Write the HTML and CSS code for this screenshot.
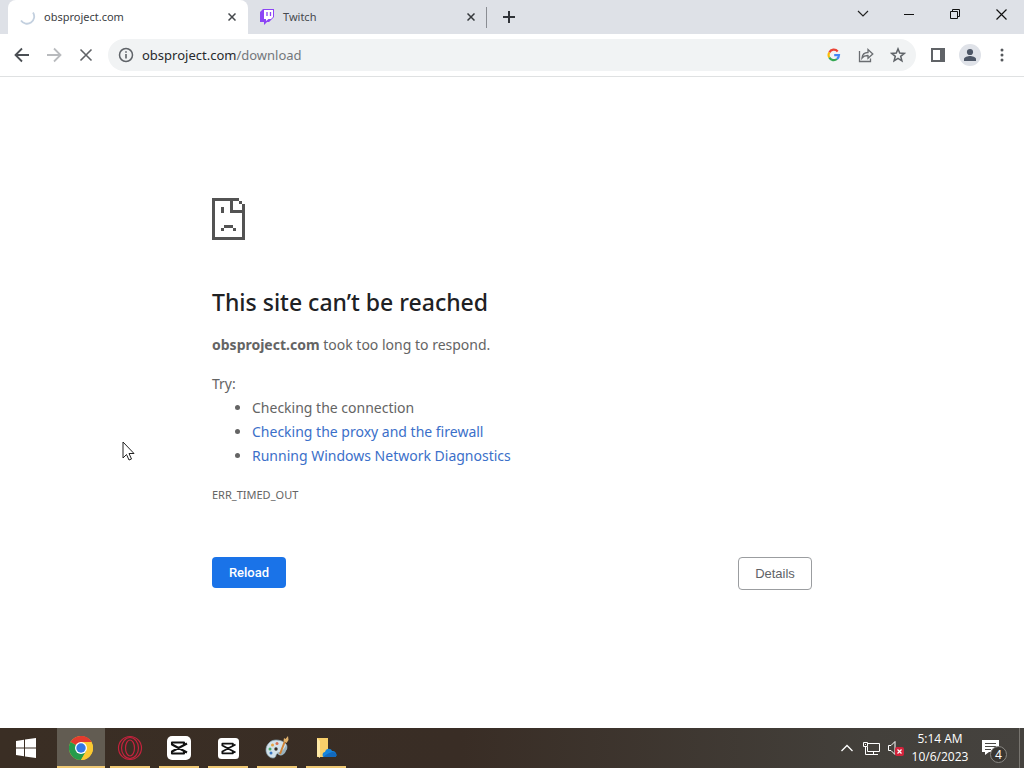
FILE: index.html
```html
<!DOCTYPE html>
<html lang="en">
<head>
<meta charset="utf-8">
<title>obsproject.com</title>
<link rel="stylesheet" href="styles.css">
</head>
<body>
<header class="browser">
  <div class="tabstrip">
    <div class="tab active">
      <svg class="tab-icon" width="16" height="16" viewBox="0 0 16 16" fill="none"><path d="M1 11.500A7 7 0 1 0 13 3.500" stroke="#c3d0df" stroke-width="1.800"/></svg>
      <span class="tab-title">obsproject.com</span>
      <button class="tab-close" aria-label="Close tab"><svg width="8" height="8" viewBox="0 0 8 8"><path d="M.5.500l7 7M7.500.500l-7 7" stroke="#45484c" stroke-width="1.500"/></svg></button>
    </div>
    <div class="tab">
      <svg class="tab-icon" width="16" height="16" viewBox="0 0 16 16"><path d="M4 0L1 3v10h4v3l3-3h2l5-5V0z" fill="#8c45f5"/><path d="M5 1h9v7l-2 2H9.500L7 12v-2H5z" fill="#fff"/><path d="M8 3v4M11.500 3v4" stroke="#8c45f5" stroke-width="1.300"/></svg>
      <span class="tab-title">Twitch</span>
      <button class="tab-close" aria-label="Close tab"><svg width="8" height="8" viewBox="0 0 8 8"><path d="M.5.500l7 7M7.500.500l-7 7" stroke="#35383c" stroke-width="1.500"/></svg></button>
    </div>
    <button class="new-tab" aria-label="New tab"><svg width="12" height="12" viewBox="0 0 12 12"><path d="M6 0v12M0 6h12" stroke="#303338" stroke-width="2"/></svg></button>
    <div class="window-controls">
      <button aria-label="Search tabs"><svg width="12" height="8" viewBox="0 0 12 8" fill="none"><path d="M1 1l5 5 5-5" stroke="#222" stroke-width="1.200"/></svg></button>
      <button aria-label="Minimize"><svg width="10" height="10" viewBox="0 0 10 10"><path d="M0 5.500h10" stroke="#111"/></svg></button>
      <button aria-label="Restore"><svg width="10" height="10" viewBox="0 0 10 10" fill="none" stroke="#111"><path d="M.5 2.500h7v7h-7zM2.500 2.500v-2h7v7h-2"/></svg></button>
      <button aria-label="Close"><svg width="11" height="11" viewBox="0 0 11 11"><path d="M.5.500l10 10M10.500.500l-10 10" stroke="#111" stroke-width="1.200"/></svg></button>
    </div>
  </div>
  <div class="toolbar">
    <button class="tool" aria-label="Back"><svg width="16" height="16" viewBox="0 0 16 16" fill="none" stroke="#4b4f54" stroke-width="1.800"><path d="M15 8H2M8 1.500L1.500 8 8 14.500"/></svg></button>
    <button class="tool" aria-label="Forward"><svg width="16" height="16" viewBox="0 0 16 16" fill="none" stroke="#b9bbbe" stroke-width="1.800"><path d="M1 8h13M8 1.500L14.500 8 8 14.500"/></svg></button>
    <button class="tool" aria-label="Stop loading"><svg width="14" height="14" viewBox="0 0 14 14"><path d="M1.500 1.500l11 11M12.500 1.500l-11 11" stroke="#606367" stroke-width="1.600"/></svg></button>
    <div class="omnibox">
      <button class="info" aria-label="Site information"><svg width="16" height="16" viewBox="0 0 16 16" fill="none"><circle cx="8" cy="8" r="6.500" stroke="#5f6368" stroke-width="1.500"/><path d="M8 7v4.500M8 4.300v1.500" stroke="#5f6368" stroke-width="1.600"/></svg></button>
      <div class="url" role="textbox" aria-label="Address" contenteditable="true" spellcheck="false">obsproject.com<span class="path">/download</span></div>
      <button class="tool" aria-label="Search with Google"><svg width="14" height="14" viewBox="0 0 14 14" fill="none" stroke-width="2.200"><path d="M2.300 4.500A5 5 0 0 1 10.700 3.500" stroke="#ea4335"/><path d="M2.300 4.500A5 5 0 0 0 2.300 9.500" stroke="#fbbc05"/><path d="M2.300 9.500A5 5 0 0 0 10 11" stroke="#34a853"/><path d="M10 11A5 5 0 0 0 12 7.100H7.200" stroke="#4285f4"/></svg></button>
      <button class="tool" aria-label="Share"><svg width="16" height="16" viewBox="0 0 16 16" fill="none" stroke="#6a6d71" stroke-width="1.300"><path d="M1.500 4v10.500h11v-3M4 11c.4-4 2.500-5.500 6-5.500v-3L14.800 7 10 11.300V8.500C7.500 8.400 5.500 9 4 11z"/></svg></button>
      <button class="tool" aria-label="Bookmark this tab"><svg width="16" height="16" viewBox="0 0 16 16" fill="none" stroke="#5f6368" stroke-width="1.500"><path d="M8 1.900l1.700 4.200 4.500.3-3.500 2.900 1.200 4.500L8 11.400l-3.900 2.400 1.200-4.500-3.500-2.900 4.500-.3z"/></svg></button>
    </div>
    <button class="tool" aria-label="Side panel"><svg width="14" height="14" viewBox="0 0 14 14"><path d="M0 0h14v14H0zM2 2v10h7V2z" fill="#606367" fill-rule="evenodd"/></svg></button>
    <button class="tool" aria-label="Profile"><svg width="22" height="22" viewBox="0 0 22 22"><circle cx="11" cy="11" r="11" fill="#dfe2e8"/><circle cx="11" cy="8" r="3.100" fill="#4d5666"/><path d="M5 17v-2c0-2 4-3 6-3s6 1 6 3v2z" fill="#4d5666"/></svg></button>
    <button class="tool" aria-label="Menu"><svg width="4" height="14" viewBox="0 0 4 14" fill="#55585c"><circle cx="2" cy="2" r="1.500"/><circle cx="2" cy="7" r="1.500"/><circle cx="2" cy="12" r="1.500"/></svg></button>
  </div>
</header>

<main class="page">
  <div class="error">
    <svg class="sad" width="33" height="42" viewBox="0 0 11 14" fill="#535353" shape-rendering="crispEdges"><path d="M0 0h9v1H7v3h4v10H0zM1 1v12h9V5H6V1zM9 1h1v1H9zM10 2h1v2h-1zM3 3h1v2H3zM4 9h3v1H4zM3 10h1v1H3zM7 10h1v1H7z" fill-rule="evenodd"/></svg>
    <h1>This site can’t be reached</h1>
    <p><strong>obsproject.com</strong> took too long to respond.</p>
    <div class="try">
      <p>Try:</p>
      <ul>
        <li>Checking the connection</li>
        <li><a href="#proxy">Checking the proxy and the firewall</a></li>
        <li><a href="#diagnostics">Running Windows Network Diagnostics</a></li>
      </ul>
    </div>
    <div class="code">ERR_TIMED_OUT</div>
    <div class="actions">
      <button class="reload">Reload</button>
      <button class="details">Details</button>
    </div>
  </div>
</main>

<footer class="taskbar">
  <button class="start" aria-label="Start"><svg width="20" height="20" viewBox="0 0 20 20" fill="#fff"><path d="M0 3l8-1.200v7.700H0zM9 1.600L20 0v9.500H9zM0 10.500h8v7.700L0 17zM9 10.500h11V20L9 18.400z"/></svg></button>
  <div class="apps">
    <button class="app current" aria-label="Chrome"><svg width="24" height="24" viewBox="0 0 24 24"><circle cx="12" cy="12" r="12" fill="#f9c932"/><path d="M12 12L1.600 6A12 12 0 0 1 22.400 6z" fill="#e33b2e"/><path d="M12 6h10.400A12 12 0 0 0 12 0z" fill="#e33b2e"/><path d="M1.600 6A12 12 0 0 0 12 24l5.200-9L12 12z" fill="#269b4b"/><path d="M17.200 15L12 24A12 12 0 0 0 22.400 6H12z" fill="#fbc931"/><circle cx="12" cy="12" r="6" fill="#fff"/><circle cx="12" cy="12" r="4.700" fill="#3478e5"/></svg></button>
    <button class="app" aria-label="Opera GX"><svg width="26" height="26" viewBox="0 0 26 26" fill="none" stroke="#c5223d" stroke-width="1.200"><circle cx="13" cy="13" r="11.500"/><ellipse cx="13" cy="13" rx="8.500" ry="10.500"/><ellipse cx="13" cy="13" rx="4.500" ry="8"/></svg></button>
    <button class="app" aria-label="CapCut"><svg width="24" height="24" viewBox="0 0 24 24"><rect width="24" height="24" rx="5" fill="#fff"/><path d="M17 8.500V6.500H5v2L20 16.500M17 15.500v2H5v-2L20 7.500" fill="none" stroke="#111" stroke-width="2.100" stroke-linejoin="round"/></svg></button>
    <button class="app" aria-label="CapCut"><svg width="21" height="21" viewBox="0 0 24 24"><rect width="24" height="24" rx="4" fill="#fff"/><path d="M17 8.500V6.500H5v2L20 16.500M17 15.500v2H5v-2L20 7.500" fill="none" stroke="#111" stroke-width="2.100" stroke-linejoin="round"/></svg></button>
    <button class="app" aria-label="Paint"><svg width="24" height="24" viewBox="0 0 24 24"><path d="M11 4C5 4 1 9 1 14s4 8 7 8c4 0 2-4 5-5 4-1 9-1 9-6 0-4-5-7-11-7z" fill="#d3e2ea" stroke="#8aa5b4" stroke-width=".7"/><path d="M12 17c2 4 7 3 9-2 1-2 1-4 0-6-2 5-5 7-9 8z" fill="#9ab2be"/><circle cx="5" cy="13" r="1.500" fill="#4aaa6a"/><circle cx="7.500" cy="9" r="1.500" fill="#e5a444"/><circle cx="12" cy="7.500" r="1.500" fill="#d97050"/><circle cx="6" cy="17" r="1.500" fill="#3b78c5"/><circle cx="11" cy="13" r="1.700" fill="#3a3028"/><path d="M15 18l5-13" stroke="#cf8438" stroke-width="2"/><path d="M18.500 5l.5-3 1.500 1L23 0l.5 4-2 3z" fill="#e0b16c"/></svg></button>
    <button class="app" aria-label="File Explorer"><svg width="22" height="22" viewBox="0 0 22 22"><path d="M2 1h11v19H2z" fill="#f8cf6a"/><path d="M2 1l3 3v17l-3-2z" fill="#ffe9a6"/><path d="M9 20c-2 0-2-5 1-5 1-4 6-4 7-1 4-.5 6 5 3 6z" fill="#1684dc"/><path d="M9 20c-1-1 5-4 8-5 4-.5 6 4 3 5z" fill="#1269bd"/></svg></button>
  </div>
  <div class="tray">
    <button aria-label="Show hidden icons"><svg width="12" height="8" viewBox="0 0 12 8" fill="none"><path d="M.5 7L6 1.500 11.500 7" stroke="#fff" stroke-width="1.300"/></svg></button>
    <button aria-label="Network"><svg width="17" height="15" viewBox="0 0 17 15" fill="none" stroke="#fff"><path d="M5 2.500h11.500v8h-12V6M10.500 10.500v3M6 13.500h9M.5 1.500h4v4h-4zM2.500 5.500v8H7M2 3.500h1"/></svg></button>
    <button aria-label="Muted"><svg width="17" height="16" viewBox="0 0 17 16"><path d="M1.500 5.500H4l4-4v13l-4-4H1.500z" fill="none" stroke="#fff"/><rect x="8" y="7" width="9" height="9" rx="2" fill="#d3233b"/><path d="M10.500 9.500l4 4M14.500 9.500l-4 4" stroke="#fff" stroke-width="1.200"/></svg></button>
    <div class="clock"><time>5:14 AM</time><time>10/6/2023</time></div>
    <button class="notes" aria-label="4 notifications"><svg width="18" height="16" viewBox="0 0 18 16"><path d="M0 0h17v12H7l-4 3v-3H0z" fill="#fff"/><path d="M3 3.500h11M3 6.500h11M3 9.500h6" stroke="#4a4844"/></svg><span class="badge">4</span></button>
    <div class="desktop-edge"></div>
  </div>
</footer>

<svg class="cursor" width="13" height="20" viewBox="0 0 13 20"><path d="M1 1v16l3.500-3.500L7 19l2.500-1-2.500-5.500h5z" fill="#fff" stroke="#222"/></svg>
</body>
</html>
```

FILE: styles.css
```css
* { box-sizing: border-box; }
body {
  margin: 0;
  min-height: 100vh;
  display: flex;
  flex-direction: column;
  background: #fff;
  font-family: "Noto Sans", "Open Sans", sans-serif;
}
button {
  display: flex;
  align-items: center;
  justify-content: center;
  padding: 0;
  border: 0;
  background: none;
  font: inherit;
  color: inherit;
}
svg { display: block; flex: none; }

.tabstrip {
  display: flex;
  height: 34px;
  padding-left: 8px;
  background: #dee1e7;
}
.tab {
  display: flex;
  align-items: center;
  flex: 0 1 239px;
  gap: 8px;
  height: 34px;
  padding: 0 7px 1px 11px;
  border-right: 1px solid transparent;
  font-size: 11px;
  color: #46494e;
}
.tab:not(.active) {
  border-image: linear-gradient(transparent 8px, #8a8d93 8px, #8a8d93 27px, transparent 27px) 1;
}
.tab.active {
  flex-basis: 240px;
  padding-left: 12px;
  border-radius: 8px 8px 0 0;
  background: #fff;
  color: #3c4043;
}
.tab-title { flex: 1; }
.tab-close { width: 16px; height: 16px; }
.new-tab { width: 28px; margin-left: 8px; }
.window-controls { display: flex; margin-left: auto; }
.window-controls button { width: 46px; height: 28px; }

.toolbar {
  display: flex;
  align-items: center;
  height: 43px;
  padding: 0 6px;
  border-bottom: 1px solid #dfe1e2;
  background: #fff;
}
.tool { width: 32px; height: 32px; flex: none; }
.omnibox {
  display: flex;
  align-items: center;
  flex: 1;
  height: 32px;
  margin: 0 6px;
  padding: 0 2px 0 10px;
  border-radius: 16px;
  background: #f1f3f4;
}
.url {
  flex: 1;
  margin-left: 8px;
  font-size: 13px;
  color: #27292c;
}
.path { color: #73777b; }

.page { flex: 1; padding: 121px 24px 0; }
.error {
  max-width: 600px;
  margin: 0 auto;
  font-size: 14px;
  line-height: 24px;
  color: #646464;
}
h1 {
  margin: 46px 0 15px;
  font-size: 23px;
  font-weight: 500;
  line-height: 32px;
  color: #202124;
}
p { margin: 0; }
.try { margin-top: 15px; }
ul { margin: 0; padding-left: 40px; }
a { color: #3b6fc9; text-decoration: none; }
.code {
  margin-top: 15px;
  font-size: 11px;
}
.actions {
  display: flex;
  justify-content: space-between;
  align-items: flex-start;
  margin-top: 50px;
  font-family: "Liberation Sans", sans-serif;
  font-size: 13px;
}
.reload, .details { width: 74px; border-radius: 4px; }
.reload {
  height: 31px;
  background: #1a73e8;
  font-family: Roboto, sans-serif;
  font-weight: 500;
  color: #fff;
}
.details {
  height: 33px;
  border: 1px solid #9b9da0;
  color: #5f6368;
}

.taskbar {
  display: flex;
  height: 40px;
  background: linear-gradient(90deg, #3a2e24, #392d25 45%, #43403b 85%, #45423e);
  color: #fff;
}
.start { width: 52px; }
.apps {
  display: flex;
  gap: 1px;
  margin-left: 5px;
}
.app {
  width: 48px;
  background: linear-gradient(#f0c974, #f0c974) center bottom / 40px 2px no-repeat;
}
.app.current {
  background: linear-gradient(#f0c974, #f0c974) center bottom / 100% 2px no-repeat, #625c52;
}
.tray { display: flex; margin-left: auto; }
.tray button { width: 24px; }
.clock {
  display: flex;
  flex-direction: column;
  align-items: center;
  justify-content: center;
  width: 66px;
  font-family: "Open Sans", sans-serif;
  font-size: 12px;
  line-height: 18px;
}
.tray .notes {
  position: relative;
  width: 46px;
  padding-right: 10px;
}
.badge {
  position: absolute;
  left: 17px;
  top: 18px;
  width: 17px;
  height: 17px;
  border: 1px solid #8b8985;
  border-radius: 50%;
  background: #393632;
  font-size: 12px;
  line-height: 15px;
}
.desktop-edge { width: 5px; border-left: 1px solid #77746f; }
.cursor { position: absolute; left: 122px; top: 441px; }
```
